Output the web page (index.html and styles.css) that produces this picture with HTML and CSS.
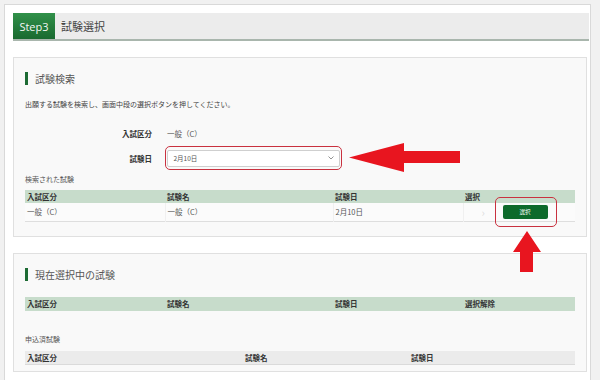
FILE: index.html
```html
<!DOCTYPE html>
<html lang="ja">
  <head>
    <meta charset="UTF-8" />
    <meta name="viewport" content="width=device-width, initial-scale=1.0" />
    <title>試験選択</title>
    <link rel="stylesheet" href="styles.css">
  </head>
  <body>
    <div class="page">
      <div class="step-head">
        <div class="step-no">Step3</div>
        <div class="step-title">試験選択</div>
      </div>

      <div class="card">
        <h2 class="card-title">試験検索</h2>
        <p class="desc">出願する試験を検索し、画面中段の選択ボタンを押してください。</p>

        <div class="form-row first">
          <div class="form-label">入試区分</div>
          <div class="form-value">一般（C）</div>
        </div>
        <div class="form-row">
          <div class="form-label">試験日</div>
          <div class="mark-box">
            <div class="select">
              <span>2月10日</span>
              <svg class="chev" width="6" height="4" viewBox="0 0 6 4"><path d="M0.5 0.5 L3 3 L5.5 0.5" fill="none" stroke="#777" stroke-width="0.8"/></svg>
            </div>
            <svg class="arrow-left" width="111" height="29" viewBox="0 0 111 29">
              <polygon points="0,14.5 55,0 55,8 111,8 111,20 55,20 55,29" fill="#e8151f"/>
            </svg>
          </div>
        </div>

        <p class="sub-label">検索された試験</p>
        <table class="grid">
          <colgroup>
            <col style="width:140px" /><col style="width:168px" /><col style="width:130px" /><col />
          </colgroup>
          <thead>
            <tr class="head-green">
              <td>入試区分</td><td>試験名</td><td>試験日</td><td>選択</td>
            </tr>
          </thead>
          <tbody>
            <tr class="data-row">
              <td>一般（C）</td>
              <td>一般（C）</td>
              <td>2月10日</td>
              <td class="pick-cell">
                <span class="faint">›</span>
                <button class="pick-btn">選択</button>
                <div class="btn-mark"></div>
                <svg class="arrow-up" width="28" height="41" viewBox="0 0 28 41">
                  <polygon points="14,0 28,21 20,21 20,41 7,41 7,21 0,21" fill="#e8151f"/>
                </svg>
              </td>
            </tr>
          </tbody>
        </table>
      </div>

      <div class="card second">
        <h2 class="card-title">現在選択中の試験</h2>
        <table class="grid">
          <colgroup>
            <col style="width:140px" /><col style="width:168px" /><col style="width:130px" /><col />
          </colgroup>
          <thead>
            <tr class="head-green tall">
              <td>入試区分</td><td>試験名</td><td>試験日</td><td>選択解除</td>
            </tr>
          </thead>
        </table>

        <p class="sub-label applied">申込済試験</p>
        <table class="grid">
          <colgroup>
            <col style="width:218px" /><col style="width:166px" /><col />
          </colgroup>
          <thead>
            <tr class="head-gray">
              <td>入試区分</td><td>試験名</td><td>試験日</td>
            </tr>
          </thead>
        </table>
      </div>
    </div>
  </body>
</html>
```

FILE: styles.css
```css
* {
  margin: 0px;
  padding: 0px;
  box-sizing: border-box;
}
body {
  background: #f1f1f1;
  font-family: "Noto Sans CJK JP", "Noto Sans", sans-serif;
  color: #333;
  overflow: hidden;
}

.page {
  width: 587px;
  height: 376px;
  margin: 4px 0 0 4px;
  background: #fff;
  border: 1px solid #d9d9d9;
  border-bottom: none;
  padding: 8px 1px 0 8px;
}

.step-head {
  display: flex;
  height: 28px;
  background: #ececec;
  border-bottom: 2px solid #a9b6ad;
}
.step-no {
  width: 42px;
  display: flex;
  align-items: center;
  justify-content: center;
  background: linear-gradient(#31914a, #1a6a30);
  color: #f4f8f4;
  font-family: "Open Sans", "Noto Sans", sans-serif;
  font-size: 11px;
}
.step-title {
  display: flex;
  align-items: center;
  margin-left: 6px;
  font-size: 11px;
  color: #444;
}

.card {
  margin-top: 16px;
  width: 574px;
  background: #f9f9f9;
  border: 1px solid #e0e0e0;
  padding: 14px 11px 14px 11px;
}
.card.second {
  padding-bottom: 6px;
}

.card-title {
  height: 13px;
  line-height: 13px;
  border-left: 3px solid #1d6b34;
  padding-left: 7px;
  font-size: 10px;
  font-weight: normal;
  color: #555;
}

.desc {
  margin-top: 15px;
  font-size: 7px;
  line-height: 8px;
  color: #444;
}

.form-row {
  display: flex;
  align-items: center;
  margin-top: 6px;
}
.form-row.first {
  margin-top: 18px;
  height: 14px;
}
.form-label {
  width: 127px;
  text-align: right;
  font-size: 7.5px;
  font-weight: bold;
  color: #333;
}
.form-value {
  margin-left: 15px;
  font-size: 7.5px;
  color: #555;
}

.mark-box {
  position: relative;
  margin-left: 13px;
  border: 1.5px solid #c9313f;
  border-radius: 5px;
  padding: 2.5px 1.5px 2.5px 0.5px;
}
.select {
  width: 173px;
  height: 17px;
  background: #fff;
  border: 1px solid #cfcfcf;
  border-radius: 2px;
  display: flex;
  align-items: center;
  justify-content: space-between;
  padding: 0 5px 0 6px;
  font-size: 6.5px;
  color: #555;
}
.arrow-left {
  position: absolute;
  left: 183px;
  top: -4px;
}

.sub-label {
  margin-top: 5px;
  font-size: 7px;
  line-height: 8px;
  color: #555;
}
.sub-label.applied {
  margin-top: 24px;
}

.grid {
  width: 550px;
  border-collapse: collapse;
  table-layout: fixed;
  margin-top: 7px;
  font-size: 7.5px;
}
.grid td {
  padding: 0 2px;
  white-space: nowrap;
}
.head-green {
  height: 13px;
  background: #c7dccb;
  font-weight: bold;
  color: #333;
}
.head-green.tall {
  height: 14px;
}
.second .grid {
  margin-top: 16px;
}
.second .applied + .grid {
  margin-top: 8px;
}
.head-gray {
  height: 14px;
  background: #ebebeb;
  border-bottom: 1px solid #dadada;
  font-weight: bold;
  color: #333;
}

.data-row {
  height: 18px;
  background: #fbfbfb;
  border-bottom: 1px solid #dedede;
  color: #555;
}
.data-row td + td {
  border-left: 1px solid #f0f0f0;
}

.pick-cell {
  position: relative;
}
.faint {
  position: absolute;
  left: 18px;
  top: 1px;
  font-size: 11px;
  color: #dcdcdc;
}
.pick-btn {
  display: block;
  margin-left: 37px;
  width: 45px;
  height: 14px;
  background: #0d6a2b;
  border: none;
  border-radius: 2px;
  color: #fff;
  font-family: "Noto Sans CJK JP", sans-serif;
  font-size: 5.5px;
}
.btn-mark {
  position: absolute;
  left: 31px;
  top: -6px;
  width: 62px;
  height: 30px;
  border: 1.5px solid #c9313f;
  border-radius: 5px;
}
.arrow-up {
  position: absolute;
  left: 49px;
  top: 28px;
}
```
